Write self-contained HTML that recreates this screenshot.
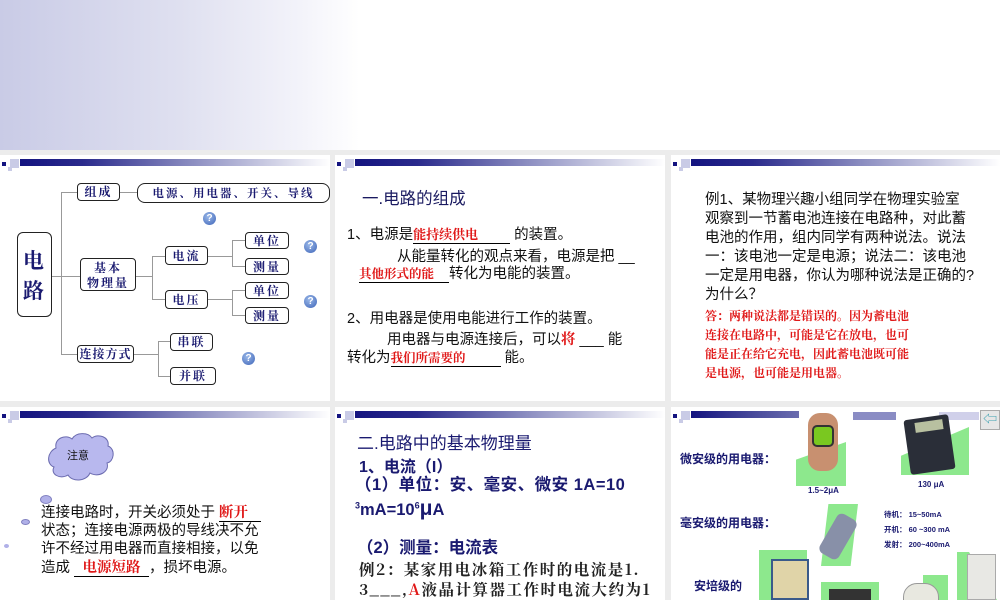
<!DOCTYPE html>
<html><head><meta charset="utf-8"><style>
*{margin:0;padding:0;box-sizing:border-box}
body{width:1000px;height:600px;overflow:hidden;background:#ececec;position:relative;font-family:"Liberation Sans","Noto Sans CJK SC",sans-serif}
.top{position:absolute;left:0;top:0;width:1000px;height:150px;background:linear-gradient(90deg,#c9cbe6 0%,#dfe0f0 18%,#f3f3fa 30%,#fff 36%)}
.s{position:absolute;background:#fff;overflow:hidden}
.bar{position:absolute;left:8px;top:4px;height:8px;right:0}
.bar i{position:absolute;display:block}
.bar .g{left:12px;top:0;height:7px;right:0;background:linear-gradient(90deg,#141480 0%,#2a2a8c 20%,#8a8cc0 55%,#fff 100%)}
.bar .a{left:-6px;top:3px;width:4px;height:4px;background:#141480}
.bar .b{left:2px;top:0;width:9px;height:9px;background:#c9cbe6}
.bar .c{left:0;top:8px;width:4px;height:4px;background:#c9cbe6}
.t{position:absolute;white-space:nowrap}
.bx{position:absolute;border:1.3px solid #222;border-radius:4px;color:#1a1a70;font-weight:bold;font-size:12px;text-align:center;font-family:"Noto Serif CJK SC",serif;letter-spacing:2px}
.ln{position:absolute;background:#999}
.q{position:absolute;width:13px;height:13px;border-radius:50%;background:radial-gradient(circle at 40% 35%,#9ab8e8,#3d64b8);color:#fff;font-size:10px;font-weight:bold;text-align:center;line-height:13px}
.red{color:#e01818;font-weight:bold;font-family:"Noto Serif CJK SC",serif}
.u{border-bottom:1px solid #000;display:inline-block}
</style></head><body>
<div class="top"></div>

<!-- slide 1 -->
<div class="s" style="left:0;top:155px;width:330px;height:246px">
<div class="bar"><i class="g"></i><i class="a"></i><i class="b"></i><i class="c"></i></div>
</div>
<div style="position:absolute;left:0;top:0">
<div class="ln" style="left:52px;top:276px;width:9px;height:1px"></div>
<div class="ln" style="left:61px;top:192px;width:1px;height:163px"></div>
<div class="ln" style="left:61px;top:192px;width:16px;height:1px"></div>
<div class="ln" style="left:120px;top:192px;width:17px;height:1px"></div>
<div class="ln" style="left:61px;top:276px;width:19px;height:1px"></div>
<div class="ln" style="left:61px;top:354px;width:16px;height:1px"></div>
<div class="ln" style="left:136px;top:276px;width:16px;height:1px"></div>
<div class="ln" style="left:152px;top:256px;width:1px;height:44px"></div>
<div class="ln" style="left:152px;top:256px;width:13px;height:1px"></div>
<div class="ln" style="left:152px;top:299px;width:13px;height:1px"></div>
<div class="ln" style="left:208px;top:256px;width:24px;height:1px"></div>
<div class="ln" style="left:232px;top:240px;width:1px;height:27px"></div>
<div class="ln" style="left:232px;top:240px;width:13px;height:1px"></div>
<div class="ln" style="left:232px;top:266px;width:13px;height:1px"></div>
<div class="ln" style="left:208px;top:299px;width:24px;height:1px"></div>
<div class="ln" style="left:232px;top:290px;width:1px;height:26px"></div>
<div class="ln" style="left:232px;top:290px;width:13px;height:1px"></div>
<div class="ln" style="left:232px;top:315px;width:13px;height:1px"></div>
<div class="ln" style="left:134px;top:354px;width:24px;height:1px"></div>
<div class="ln" style="left:158px;top:341px;width:1px;height:35px"></div>
<div class="ln" style="left:158px;top:341px;width:12px;height:1px"></div>
<div class="ln" style="left:158px;top:376px;width:12px;height:1px"></div>
<div class="bx" style="left:17px;top:232px;width:35px;height:85px;font-size:21px;line-height:30px;padding-top:12px;border-radius:6px">电<br>路</div>
<div class="bx" style="left:77px;top:183px;width:43px;height:18px;line-height:16px">组成</div>
<div class="bx" style="left:137px;top:183px;width:193px;height:20px;line-height:18px;border-radius:8px;font-size:11.5px">电源、用电器、开关、导线</div>
<div class="bx" style="left:80px;top:258px;width:56px;height:33px;line-height:15px;padding-top:1px">基本<br>物理量</div>
<div class="bx" style="left:165px;top:246px;width:43px;height:19px;line-height:17px">电流</div>
<div class="bx" style="left:165px;top:290px;width:43px;height:19px;line-height:17px">电压</div>
<div class="bx" style="left:245px;top:232px;width:44px;height:17px;line-height:15px">单位</div>
<div class="bx" style="left:245px;top:258px;width:44px;height:17px;line-height:15px">测量</div>
<div class="bx" style="left:245px;top:282px;width:44px;height:17px;line-height:15px">单位</div>
<div class="bx" style="left:245px;top:307px;width:44px;height:17px;line-height:15px">测量</div>
<div class="bx" style="left:77px;top:345px;width:57px;height:18px;line-height:16px;letter-spacing:1px">连接方式</div>
<div class="bx" style="left:170px;top:333px;width:43px;height:18px;line-height:16px">串联</div>
<div class="bx" style="left:170px;top:367px;width:46px;height:18px;line-height:16px">并联</div>
<div class="q" style="left:203px;top:212px">?</div>
<div class="q" style="left:304px;top:240px">?</div>
<div class="q" style="left:304px;top:295px">?</div>
<div class="q" style="left:242px;top:352px">?</div>
</div>

<!-- slide 2 -->
<div class="s" style="left:335px;top:155px;width:330px;height:246px;font-size:14.5px;color:#111">
<div class="bar"><i class="g"></i><i class="a"></i><i class="b"></i><i class="c"></i></div>
<div class="t" style="left:27px;top:30px;font-size:16.5px;color:#1a1a60">一.电路的组成</div>
<div class="t" style="left:12px;top:68px">1、电源是<span class="u red" style="width:97px;font-size:13px">能持续供电</span> 的装置。</div>
<div class="t" style="left:62px;top:90px">从能量转化的观点来看，电源是把 __</div>
<div class="t" style="left:24px;top:107px"><span class="u red" style="width:90px;font-size:12.5px">其他形式的能</span>转化为电能的装置。</div>
<div class="t" style="left:12px;top:152px">2、用电器是使用电能进行工作的装置。</div>
<div class="t" style="left:52px;top:173px">用电器与电源连接后，可以<span class="red">将</span> ___ 能</div>
<div class="t" style="left:12px;top:191px">转化为<span class="u red" style="width:110px;font-size:12.5px">我们所需要的</span> 能。</div>
</div>

<!-- slide 3 -->
<div class="s" style="left:671px;top:155px;width:329px;height:246px;font-size:14.5px;color:#111;line-height:19px">
<div class="bar"><i class="g"></i><i class="a"></i><i class="b"></i><i class="c"></i></div>
<div class="t" style="left:34px;top:36px">例1、某物理兴趣小组同学在物理实验室<br>观察到一节蓄电池连接在电路种，对此蓄<br>电池的作用，组内同学有两种说法。说法<br>一：该电池一定是电源；说法二：该电池<br>一定是用电器，你认为哪种说法是正确的?<br>为什么？</div>
<div class="t red" style="left:34px;top:151px;font-size:12px;line-height:19px">答：两种说法都是错误的。因为蓄电池<br>连接在电路中，可能是它在放电，也可<br>能是正在给它充电，因此蓄电池既可能<br>是电源，也可能是用电器。</div>
</div>

<!-- slide 4 -->
<div class="s" style="left:0;top:407px;width:330px;height:193px;font-size:14.5px;color:#111">
<div class="bar"><i class="g"></i><i class="a"></i><i class="b"></i><i class="c"></i></div>
<svg style="position:absolute;left:46px;top:23px" width="70" height="55" viewBox="0 0 70 55"><path d="M10 18 C8 8 20 4 26 9 C30 2 42 2 46 8 C52 3 64 7 62 16 C70 19 68 32 61 33 C64 42 52 48 44 43 C40 52 26 52 22 45 C14 50 4 44 8 37 C0 34 1 22 10 18Z" fill="#b8b8ee" stroke="#6c6cb0" stroke-width="1"/><text x="21" y="29" font-size="11" fill="#111" font-family="Noto Sans CJK SC">注意</text></svg>
<div style="position:absolute;left:40px;top:88px;width:12px;height:9px;border-radius:50%;background:#b0b0e8;border:1px solid #8080c0"></div>
<div style="position:absolute;left:21px;top:112px;width:9px;height:6px;border-radius:50%;background:#b0b0e8;border:1px solid #8080c0"></div>
<div style="position:absolute;left:4px;top:137px;width:5px;height:4px;border-radius:50%;background:#b0b0e8"></div>
<div class="t" style="left:41px;top:96px;line-height:18px">连接电路时，开关必须处于 <span class="u red" style="width:42px">断开</span><br>状态；连接电源两极的导线决不允<br>许不经过用电器而直接相接，以免<br>造成 <span class="u red" style="width:75px;text-align:center">电源短路</span>，损坏电源。</div>
</div>

<!-- slide 5 -->
<div class="s" style="left:335px;top:407px;width:330px;height:193px;color:#1a1a70">
<div class="bar"><i class="g"></i><i class="a"></i><i class="b"></i><i class="c"></i></div>
<div class="t" style="left:22px;top:22px;font-size:17px">二.电路中的基本物理量</div>
<div class="t" style="left:24px;top:46px;font-size:16px;font-weight:bold">1、电流（I）</div>
<div class="t" style="left:20px;top:64px;font-size:16.5px;font-weight:bold;letter-spacing:.5px">（1）单位：安、毫安、微安 1A=10</div>
<div class="t" style="left:20px;top:90px;font-size:16.5px;font-weight:bold"><sup style="font-size:9px">3</sup>mA=10<sup style="font-size:9px">6</sup><span style="font-size:21px">μ</span>A</div>
<div class="t" style="left:22px;top:127px;font-size:16.5px;font-weight:bold">（2）测量：电流表</div>
<div class="t" style="left:24px;top:151px;font-size:15.5px;font-weight:bold;color:#222;font-family:'Noto Serif CJK SC',serif;letter-spacing:1.5px">例2：某家用电冰箱工作时的电流是1.</div>
<div class="t" style="left:24px;top:171px;font-size:15.5px;font-weight:bold;color:#222;font-family:'Noto Serif CJK SC',serif;letter-spacing:1.5px">3___,<span style="color:#e01818">A</span>液晶计算器工作时电流大约为1</div>
</div>

<!-- slide 6 -->
<div class="s" style="left:671px;top:407px;width:329px;height:193px;color:#1a1a70">
<div class="bar" style="right:auto;width:120px"><i class="g" style="background:linear-gradient(90deg,#141480,#4a4c9c 60%,#6a6cae)"></i><i class="a"></i><i class="b"></i><i class="c"></i></div>
<div style="position:absolute;left:182px;top:5px;width:43px;height:8px;background:#8a8cc4"></div>
<div style="position:absolute;left:225px;top:5px;width:40px;height:8px;background:#fff"></div>
<div style="position:absolute;left:268px;top:5px;width:40px;height:8px;background:#d0d0ea"></div>
<div style="position:absolute;left:309px;top:3px;width:20px;height:20px;background:#e6e6e6;border:1px solid #aaa;color:#3aa0b0;font-size:14px;text-align:center;line-height:17px">⇦</div>
<div class="t" style="left:9px;top:43px;font-size:12px;font-weight:bold">微安级的用电器：</div>
<div class="t" style="left:9px;top:107px;font-size:12px;font-weight:bold">毫安级的用电器：</div>
<div class="t" style="left:23px;top:170px;font-size:12px;font-weight:bold">安培级的</div>
<div style="position:absolute;left:125px;top:35px;width:50px;height:44px;background:#8de88d;clip-path:polygon(0 40%,100% 0,100% 100%,0 100%)"></div>
<div style="position:absolute;left:137px;top:6px;width:30px;height:58px;border-radius:12px;background:#c89070"></div>
<div style="position:absolute;left:141px;top:18px;width:22px;height:22px;border-radius:5px;background:#7ac820;border:2px solid #333"></div>
<div class="t" style="left:137px;top:79px;font-size:8px;font-weight:bold">1.5~2μA</div>
<div style="position:absolute;left:230px;top:20px;width:68px;height:48px;background:#8de88d;clip-path:polygon(0 60%,100% 0,100% 100%,0 100%)"></div>
<div style="position:absolute;left:236px;top:10px;width:45px;height:55px;background:#2a2e38;transform:rotate(-8deg);border-radius:3px"></div>
<div style="position:absolute;left:244px;top:14px;width:28px;height:10px;background:#b8c0a0;transform:rotate(-8deg)"></div>
<div class="t" style="left:247px;top:73px;font-size:8px;font-weight:bold">130 μA</div>
<div style="position:absolute;left:150px;top:97px;width:37px;height:62px;background:#8de88d;clip-path:polygon(20% 0,100% 0,80% 100%,0 100%)"></div>
<div style="position:absolute;left:156px;top:107px;width:22px;height:45px;background:#8890a8;transform:rotate(30deg);border-radius:6px"></div>
<div class="t" style="left:213px;top:100px;font-size:7.5px;font-weight:bold;line-height:15px">待机： 15~50mA<br>开机： 60 ~300 mA<br>发射： 200~400mA</div>
<div style="position:absolute;left:88px;top:143px;width:48px;height:50px;background:#8de88d"></div>
<div style="position:absolute;left:100px;top:152px;width:38px;height:41px;background:#e0d4a8;border:2px solid #3a5a8a"></div>
<div style="position:absolute;left:150px;top:175px;width:58px;height:18px;background:#8de88d"></div>
<div style="position:absolute;left:158px;top:182px;width:42px;height:11px;background:#333"></div>
<div style="position:absolute;left:252px;top:168px;width:25px;height:25px;background:#8de88d"></div>
<div style="position:absolute;left:232px;top:176px;width:36px;height:20px;border-radius:14px 14px 0 0;background:#e8e8e0;border:1px solid #999"></div>
<div style="position:absolute;left:286px;top:145px;width:40px;height:48px;background:#8de88d;clip-path:polygon(0 0,30% 0,100% 100%,0 100%)"></div>
<div style="position:absolute;left:296px;top:147px;width:29px;height:46px;background:#e8e8e4;border:1px solid #aaa"></div>
</div>
</body></html>
